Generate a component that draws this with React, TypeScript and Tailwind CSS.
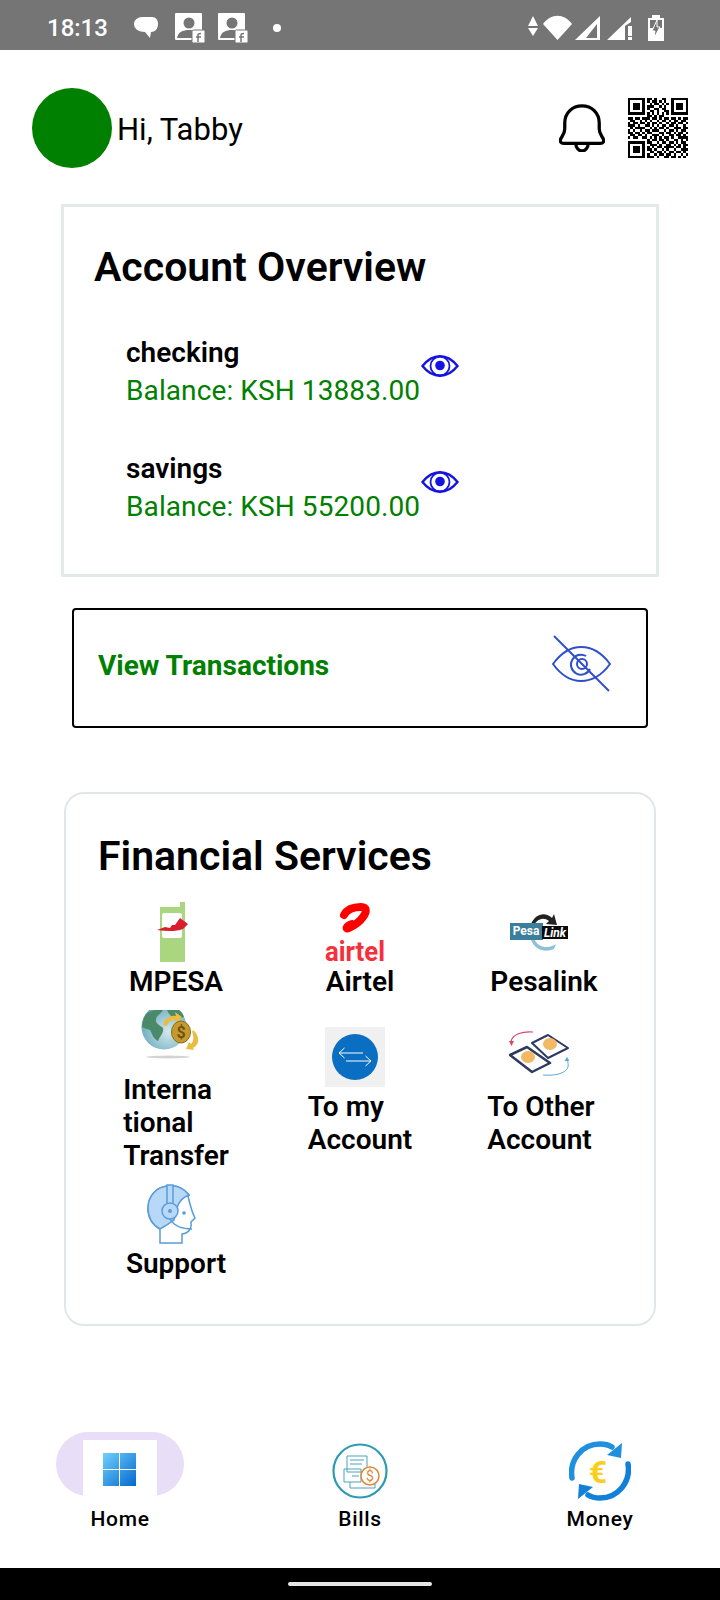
const qrRows = [
  "1111111011010011001111111",
  "1000001010110101001000001",
  "1011101001011010101011101",
  "1011101011100101001011101",
  "1011101010011011001011101",
  "1000001001101001101000001",
  "1111111010101010101111111",
  "0000000011010110000000000",
  "1101101110110101101101011",
  "0110010101001011010110110",
  "1011011010110100101101101",
  "1110100110101011011010010",
  "0101111001010110100111011",
  "1010010110111001011010110",
  "1101101011000110110101101",
  "0110110100111010011011010",
  "1011001101010101101001111",
  "0000000010110110100110101",
  "1111111011001011011010110",
  "1000001001110100110101011",
  "1011101010101101111011010",
  "1011101011010010100100111",
  "1011101001101101011011010",
  "1000001010010110110100101",
  "1111111011101001101101010",
];

const QrCode = () => (
  <svg width="60" height="60" viewBox="0 0 25 25" shapeRendering="crispEdges">
    {qrRows.map((row, y) =>
      row.split("").map((c, x) => (c === "1" ? <rect key={`${x}-${y}`} x={x} y={y} width="1" height="1" fill="#000" /> : null))
    )}
  </svg>
);

const Bell = () => (
  <svg width="46" height="48" viewBox="0 0 48 50" fill="none" stroke="#000" strokeWidth="3.400" strokeLinejoin="round">
    <path d="M24 2C14 2 6 9 6 20v6c0 5-3 8-4 10-1.500 3 0 5 3 5h38c3 0 4.500-2 3-5-1-2-4-5-4-10v-6C42 9 34 2 24 2z" />
    <path d="M17.500 41c0 4.500 3 8 6.500 8s6.500-3.500 6.500-8" />
  </svg>
);

const Eye = () => (
  <svg width="38" height="22" viewBox="0 0 38 22" fill="none">
    <path d="M1.500 11C7 4 13 1.200 19 1.200S31 4 36.500 11C31 18 25 20.800 19 20.800S7 18 1.500 11z" stroke="#1414e0" strokeWidth="2.400" />
    <circle cx="19" cy="11" r="9.500" stroke="#1414e0" strokeWidth="1.800" />
    <circle cx="19" cy="10.500" r="4.800" fill="#1414e0" />
  </svg>
);

const EyeOff = () => (
  <svg width="60" height="58" viewBox="0 0 60 58" fill="none" stroke="#3050c8" strokeWidth="2">
    <path d="M1 29C9 18 18 12 29 12s21 6 29 17c-8 11-18 17-29 17S9 40 1 29z" />
    <path d="M2 1l55 55" />
    <path d="M38 34a10 10 0 1 1-4-13" />
    <circle cx="30" cy="29" r="5" />
  </svg>
);

const MpesaIcon = () => (
  <svg width="60" height="60" viewBox="0 0 60 60">
    <path d="M19 5h20V0h5v60H19z" fill="#a9d67e" />
    <rect x="21" y="11" width="20" height="25" rx="2" fill="#fff" />
    <path d="M16 28l8-3 5 1 2-3 3 0 5-7 8 6-5 5c-8 3-17 2-26 1z" fill="#d81e2c" />
  </svg>
);

const AirtelIcon = () => (
  <svg className="overflow-visible" width="60" height="60" viewBox="0 0 60 60">
    <path d="M19 13C22 7 29 5 36 5 42 5 42 10 38 15 34 21 28 24 24 26 20 28 21 24 27 22" fill="none" stroke="#f00" strokeWidth="8" strokeLinecap="round" />
    <text x="30" y="59" textAnchor="middle" fontFamily="Roboto, sans-serif" fontWeight="700" fontSize="28" fill="#f5303a" textLength="60" lengthAdjust="spacingAndGlyphs">airtel</text>
  </svg>
);

const PesalinkIcon = () => (
  <svg width="60" height="60" viewBox="0 0 60 60">
    <g transform="translate(0 6)">
      <path d="M22 16C26 6 36 3 43 10l2-4 3 11-11-1 3-3c-5-4-11-3-15 4z" fill="#222" />
      <path d="M25 30c3 9 13 12 22 6l-2 5c-9 4-19 1-23-9z" fill="#8fc1d6" />
      <rect x="1" y="15" width="33" height="17" fill="#3b7f9c" />
      <rect x="33" y="18" width="26" height="13" fill="#0a0a0a" />
      <text x="17" y="27" textAnchor="middle" fontFamily="Roboto, sans-serif" fontWeight="700" fontSize="12" fill="#fff">Pesa</text>
      <text x="46" y="29" textAnchor="middle" fontFamily="Roboto, sans-serif" fontWeight="700" fontStyle="italic" fontSize="12" fill="#fff">Link</text>
    </g>
  </svg>
);

const GlobeIcon = () => (
  <svg width="60" height="60" viewBox="0 0 60 60">
    <defs>
      <radialGradient id="sea" cx="0.6" cy="0.6" r="0.7">
        <stop offset="0" stopColor="#d4e9ee" />
        <stop offset="1" stopColor="#5fa3b8" />
      </radialGradient>
    </defs>
    <ellipse cx="27" cy="47" rx="22" ry="1.500" fill="#d4d4d4" />
    <circle cx="23" cy="17" r="22.500" fill="url(#sea)" />
    <path d="M5 4c5-4 12-5 17-4-3 5-6 5-7 9-1 5 4 6 7 9 1 5-3 8-5 13-5-2-6-8-8-11-3-1-7-2-8-3 0-5 2-10 4-13z" fill="#4a8a68" />
    <path d="M26 0h12c3 2 4 4 5 7l-8 3c-3-2-7-5-9-10z" fill="#4a8a68" />
    <path d="M22 15c1-6 7-10 13-9l-1-4 7 5-6 6-1-3c-4 0-7 2-8 6z" fill="#e9bd3f" />
    <ellipse cx="40" cy="22" rx="9.500" ry="11" fill="#c69a2e" stroke="#8c6b1c" strokeWidth="1" />
    <text x="40" y="28" textAnchor="middle" fontFamily="Roboto, sans-serif" fontWeight="700" fontSize="16" fill="#6f5210">$</text>
    <path d="M52 20c6 5 8 14 0 18l1 2-8-1 3-7 2 2c3-3 3-8 1-12z" fill="#e9bd3f" />
  </svg>
);

const TransferIcon = () => (
  <div className="flex h-[60px] w-[60px] items-center justify-center bg-[#f0f0f0]">
    <svg width="46" height="46" viewBox="0 0 46 46" fill="none" stroke="#fff" strokeWidth="1">
      <circle cx="23" cy="23" r="23" fill="#0a6fc2" stroke="none" />
      <path d="M7 19h24M12.500 14l-5.500 5 5.500 5M14 27h25M33.500 22l5.500 5-5.500 5" />
    </svg>
  </div>
);

const OtherAccountIcon = () => (
  <svg width="60" height="60" viewBox="0 0 60 60">
    <path d="M24 5C14 4 4 7 2 14" fill="none" stroke="#d8456b" strokeWidth="1.200" />
    <path d="M0 14l2.500 5 2.500-5z" fill="#d8456b" />
    <path d="M34 48c10 1 23-1 25-8 .5-3 0-5-1-7" fill="none" stroke="#5aa7e0" strokeWidth="1" />
    <path d="M58 30l-2.500 4h5z" fill="#5aa7e0" />
    <path d="M23 16L39 8l20 13-20 10z" fill="#fff" stroke="#2e3a5e" strokeWidth="2" strokeLinejoin="round" />
    <path d="M1 28l17-8 23 16-18 9z" fill="#fff" stroke="#2e3a5e" strokeWidth="2.500" strokeLinejoin="round" />
    <ellipse cx="41" cy="17" rx="7" ry="6" fill="#f2b863" />
    <ellipse cx="19" cy="30" rx="7" ry="6" fill="#f2b863" />
  </svg>
);

const SupportIcon = () => (
  <svg width="60" height="60" viewBox="0 0 60 60" fill="none" stroke="#5b9bd8" strokeWidth="1.500">
    <path d="M19 45C10 40 7 32 7 24 7 12 16 2 28 2c8-1 16 3 20 9l-1 1c2 8 3 14 7 22l-4 4c1 5-1 11-9 12v9H19z" fill="#fff" />
    <path d="M19 45C10 40 7 32 7 24 7 12 16 2 28 2c8-1 16 3 20 9-6 2-10 6-12 13l-3 12-9 6z" fill="#b7d9f7" />
    <rect x="26" y="1" width="6" height="20" fill="#b7d9f7" />
    <circle cx="29" cy="27" r="8" fill="#b7d9f7" />
    <circle cx="29" cy="27" r="2" fill="#5b9bd8" stroke="none" />
    <circle cx="43" cy="29" r="1.800" fill="#5b9bd8" stroke="none" />
    <path d="M29 35c4 7 11 10 22 10" />
  </svg>
);

const WindowsIcon = () => (
  <svg width="34" height="34" viewBox="0 0 34 34">
    <defs>
      <linearGradient id="win" x1="0" y1="0" x2="1" y2="1">
        <stop offset="0" stopColor="#6fd0fb" />
        <stop offset="1" stopColor="#0468cf" />
      </linearGradient>
    </defs>
    <path d="M0 0h16v16H0zM17 0h16v16H17zM0 17h16v16H0zM17 17h16v16H17z" fill="url(#win)" />
  </svg>
);

const BillsIcon = () => (
  <svg width="56" height="56" viewBox="0 0 56 56" fill="none">
    <circle cx="28" cy="28" r="26.500" stroke="#2e9ab5" strokeWidth="2.200" />
    <path d="M15 13h20v16H15zM12 26h17v13H12zM18 39v6h25v-4" stroke="#4aa3bf" strokeWidth="1" fill="#fff" />
    <path d="M18 17h14M18 21h12M20 33h7" stroke="#4aa3bf" strokeWidth="1" />
    <circle cx="38" cy="33" r="9" fill="#fff" stroke="#e2883a" strokeWidth="1.500" />
    <text x="38" y="38" textAnchor="middle" fontFamily="Roboto, sans-serif" fontSize="14" fill="#e2883a">$</text>
  </svg>
);

const MoneyIcon = () => (
  <svg width="62" height="60" viewBox="0 0 62 60" fill="none">
    <path d="M3 37C0 19 13 3 31 3c5 0 9 1 12 3" stroke="#1f8fe0" strokeWidth="5.500" strokeLinecap="round" />
    <path d="M53 2l-1 15-14-3z" fill="#1f8fe0" />
    <path d="M59 23c3 18-10 34-28 34-5 0-9-1-12-3" stroke="#1080d8" strokeWidth="5.500" strokeLinecap="round" />
    <path d="M9 58l1-15 14 3z" fill="#1080d8" />
    <text x="29" y="42" textAnchor="middle" fontFamily="Roboto, sans-serif" fontWeight="700" fontSize="32" fill="#f9cf1c">€</text>
  </svg>
);

const accounts = [
  { name: "checking", balance: "Balance: KSH 13883.00" },
  { name: "savings", balance: "Balance: KSH 55200.00" },
];

const PersonBadge = ({ className }: { className: string }) => (
  <svg className={className} width="30" height="30" viewBox="0 0 30 30">
    <rect width="27" height="27" rx="1" fill="#fff" />
    <circle cx="14" cy="10" r="5.500" fill="#757575" />
    <path d="M2 25c1-6 6-8 12-8 2 0 4 0 6 1v7z" fill="#757575" />
    <rect x="17" y="17" width="13" height="13" rx="1.500" fill="#fff" stroke="#757575" />
    <path d="M23 29v-7c0-1 1-1.500 3-1.500M21 24h5" stroke="#757575" strokeWidth="1.500" fill="none" />
  </svg>
);

const StatusBar = () => (
  <div className="flex h-[50px] items-center bg-[#757575] pl-[47px] pr-[56px] pt-[6px] text-white">
    <span className="w-[61px] text-[24px] font-medium">18:13</span>
    <svg className="ml-[25px]" width="26" height="24" viewBox="0 0 26 24" fill="#fff">
      <path d="M9 1h10c4 0 6 3 6 7 0 5-3 8-7 8l-1 6-5-6c-6 0-11-3-11-8 0-4 4-7 8-7z" />
    </svg>
    <PersonBadge className="ml-[16px]" />
    <PersonBadge className="ml-[13px]" />
    <span className="ml-[25px] h-[8px] w-[8px] rounded-full bg-white" />
    <svg className="ml-auto" width="136" height="32" viewBox="0 0 136 32" fill="#fff">
      <path d="M5 4l5 10H0zM0 16h10l-5 8z" />
      <path d="M15 12C23 1 36 1 44 12L29.500 28z" />
      <path d="M72 4v24H47z" />
      <path d="M69 12v14H58z" fill="#757575" />
      <path d="M79 28L103 5v5l-6 4v14z" />
      <path d="M100 14h4v10h-4zM100 25h4v3h-4z" />
      <path d="M124 6V3h8v3h4v23h-16V6z" />
      <path d="M122 8h12v8h-12z" fill="#757575" />
      <path d="M129 8l-5 11h3l-1 7 6-11h-3z" fill="#757575" stroke="#fff" strokeWidth="1" />
    </svg>
  </div>
);

const ServiceItem = ({ icon, label, labelClass = "" }: { icon: React.ReactNode; label: React.ReactNode; labelClass?: string }) => (
  <div className="flex flex-col items-center">
    <div className="mr-[10px] flex h-[60px] w-[60px] items-center justify-center">{icon}</div>
    <div className={`mt-[3px] text-[28px] font-semibold leading-[33px] ${labelClass}`}>{label}</div>
  </div>
);

const NavItem = ({ icon, label }: { icon: React.ReactNode; label: string }) => (
  <div className="flex flex-col items-center">
    <div className="flex h-[64px] items-center justify-center pt-[13px]">{icon}</div>
    <div className="mt-[7px] text-[21px] font-medium leading-[32px] tracking-[0.7px]">{label}</div>
  </div>
);

export default function App() {
  return (
    <div className="flex h-[1600px] w-[720px] flex-col overflow-hidden bg-white text-black [font-family:Roboto,sans-serif]">
      <StatusBar />

      <div className="mt-[38px] flex h-[80px] items-center pl-[32px] pr-[32px]">
        <div className="h-[80px] w-[80px] rounded-full bg-[#008000]" />
        <span className="ml-[5px] pt-[4px] text-[31px]">Hi, Tabby</span>
        <div className="ml-auto mr-[23px]">
          <Bell />
        </div>
        <QrCode />
      </div>

      <section className="mx-[61px] mt-[36px] h-[373px] border-[3px] border-[#e4e9ec] pl-[30px] pt-[35px]">
        <h2 className="text-[41px] font-semibold leading-[50px]">Account Overview</h2>
        <div className="mt-[42px] flex flex-col gap-[41px] pl-[32px]">
          {accounts.map((a) => (
            <div key={a.name} className="flex items-center">
              <div>
                <div className="text-[28px] font-semibold leading-[37px]">{a.name}</div>
                <div className="mt-[1px] text-[28px] leading-[37px] tracking-[0.1px] text-[#008000]">{a.balance}</div>
              </div>
              <div className="mb-[12px] ml-[1px]">
                <Eye />
              </div>
            </div>
          ))}
        </div>
      </section>

      <button className="mx-[72px] mt-[31px] flex h-[120px] items-center justify-between rounded-[4px] border-2 border-black pl-[24px] pr-[34px]">
        <span className="mb-[4px] text-[28px] font-bold text-[#008000]">View Transactions</span>
        <div className="mb-[8px]">
          <EyeOff />
        </div>
      </button>

      <section className="mx-[64px] mt-[64px] h-[534px] rounded-[20px] border-2 border-[#dfe7e8] px-[18px] pt-[37px]">
        <h2 className="pl-[14px] text-[41px] font-semibold leading-[50px]">Financial Services</h2>
        <div className="mt-[21px] grid grid-cols-3 items-center justify-items-center gap-y-[12px]">
          <ServiceItem icon={<MpesaIcon />} label="MPESA" />
          <ServiceItem icon={<AirtelIcon />} label="Airtel" />
          <ServiceItem icon={<PesalinkIcon />} label="Pesalink" />
          <ServiceItem icon={<GlobeIcon />} label={<>Interna<br />tional<br />Transfer</>} />
          <ServiceItem icon={<TransferIcon />} label={<>To my<br />Account</>} />
          <ServiceItem icon={<OtherAccountIcon />} label={<>To Other<br />Account</>} labelClass="mr-[6px]" />
          <ServiceItem icon={<SupportIcon />} label="Support" />
        </div>
      </section>

      <nav className="mt-auto grid h-[136px] grid-cols-3">
        <div className="flex flex-col items-center">
          <div className="flex h-[64px] w-[128px] justify-center overflow-hidden rounded-full bg-[#e8def8]">
            <div className="mt-[8px] flex h-[56px] w-[74px] justify-center bg-white pt-[13px]">
              <WindowsIcon />
            </div>
          </div>
          <div className="mt-[7px] text-[21px] font-medium leading-[32px] tracking-[0.7px]">Home</div>
        </div>
        <NavItem icon={<BillsIcon />} label="Bills" />
        <NavItem icon={<MoneyIcon />} label="Money" />
      </nav>

      <div className="flex h-[32px] items-center justify-center bg-black">
        <div className="h-[4px] w-[144px] rounded-full bg-[#e6e6e6]" />
      </div>
    </div>
  );
}
